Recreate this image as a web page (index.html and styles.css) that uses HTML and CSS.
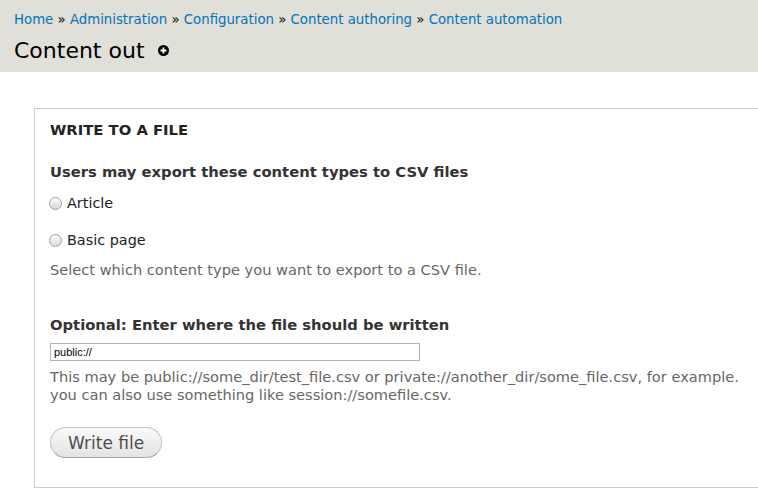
FILE: index.html
```html
<!DOCTYPE html>
<html lang="en">
<head>
    <meta charset="UTF-8">
    <meta name="viewport" content="width=device-width, initial-scale=1.0">
    <title>Content out</title>
    <link rel="stylesheet" href="styles.css">
</head>
<body>
    <header class="branding">
        <nav class="breadcrumb">
            <a href="#">Home</a> &raquo;
            <a href="#">Administration</a> &raquo;
            <a href="#">Configuration</a> &raquo;
            <a href="#">Content authoring</a> &raquo;
            <a href="#">Content automation</a>
        </nav>
        <h1 class="page-title">Content out <a href="#" class="shortcut" title="Add to shortcuts"><svg width="11" height="11" viewBox="0 0 11 11"><circle cx="5.5" cy="5.5" r="5.5" fill="#000"/><path d="M5.5 2.5v6M2.5 5.5h6" stroke="#fff" stroke-width="1.8"/></svg></a></h1>
    </header>

    <main class="page">
        <form class="export-form">
            <fieldset class="file-set">
                <legend>Write to a file</legend>

                <div class="form-item">
                    <label class="form-label">Users may export these content types to CSV files</label>
                    <div class="radios">
                        <label class="radio"><input type="radio" name="type" value="article"> Article</label>
                        <label class="radio"><input type="radio" name="type" value="page"> Basic page</label>
                    </div>
                    <p class="description">Select which content type you want to export to a CSV file.</p>
                </div>

                <div class="form-item">
                    <label class="form-label" for="path">Optional: Enter where the file should be written</label>
                    <input type="text" id="path" class="form-text" value="public://">
                    <p class="description">This may be public://some_dir/test_file.csv or private://another_dir/some_file.csv, for example.<br>you can also use something like session://somefile.csv.</p>
                </div>

                <button type="submit" class="button">Write file</button>
            </fieldset>
        </form>
    </main>
</body>
</html>
```

FILE: styles.css
```css
/* Seven-ish admin look */
body {
    margin: 0;
    font-family: "DejaVu Sans", Verdana, sans-serif;
    color: #333;
    background: #fff;
    overflow: hidden;
}

a {
    color: #0074bd;
    text-decoration: none;
}

/* Header band with breadcrumb and title */
.branding {
    background-color: #e0dfd8;
    padding: 11px 14px 0;
    height: 61px;
}

.breadcrumb {
    font-size: 13.3px;
    line-height: 18px;
    color: #000;
}

.page-title {
    margin: 7px 0 0;
    font-size: 22px;
    font-weight: normal;
    color: #000;
    line-height: 30px;
}

.shortcut {
    display: inline-block;
    margin-left: 6px;
    vertical-align: 2px;
}

.shortcut svg {
    display: block;
}

/* Form */
.page {
    padding: 36px 0 0 34px;
}

.file-set {
    position: relative;
    width: 760px;
    margin: 0;
    padding: 53px 15px 29px;
    border: 1px solid #ccc;
}

.file-set legend {
    position: absolute;
    top: 12px;
    left: 15px;
    padding: 0;
    font-size: 14.8px;
    line-height: 18px;
    font-weight: bold;
    text-transform: uppercase;
    color: #222;
}

.form-item + .form-item {
    margin-top: 36px;
}

.form-label {
    display: block;
    font-size: 14.75px;
    line-height: 20px;
    font-weight: bold;
    color: #333;
    margin-bottom: 8px;
}

.radios {
    display: flex;
    flex-direction: column;
    gap: 17px;
    padding-top: 3px;
}

.radio {
    display: flex;
    align-items: center;
    gap: 5px;
    font-size: 14.4px;
    line-height: 20px;
    color: #222;
}

.radio input {
    appearance: none;
    margin: 0 0 0 -1px;
    width: 13px;
    height: 13px;
    border-radius: 50%;
    border: 1px solid #a0a0a0;
    background: linear-gradient(#fdfdfd, #d8d8d8);
}

.description {
    margin: 11px 0 0;
    font-size: 14.6px;
    line-height: 18px;
    color: #666;
}

.form-text {
    display: block;
    box-sizing: border-box;
    width: 370px;
    height: 18px;
    padding: 0 3px;
    border: 1px solid #b4b4b4;
    font-family: "Liberation Sans", Arial, sans-serif;
    font-size: 11px;
    color: #000;
}

.form-text + .description {
    margin-top: 7px;
}

.button {
    margin-top: 23px;
    font-family: "DejaVu Sans", Verdana, sans-serif;
    font-size: 17px;
    color: #4d4d4d;
    padding: 0 17px;
    height: 31px;
    border: 1px solid #c4c4c4;
    border-bottom-color: #a8a8a8;
    border-radius: 16px;
    background: linear-gradient(#fafafa, #e3e3e3);
}
```
